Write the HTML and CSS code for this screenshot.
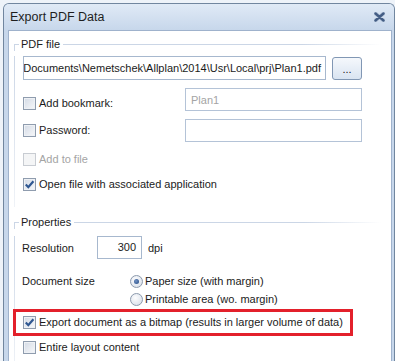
FILE: index.html
```html
<!DOCTYPE html>
<html lang="en">

<head>
    <meta charset="UTF-8">
    <title>Export PDF Data</title>
    <link rel="stylesheet" href="styles.css">
</head>

<body>
    <div class="window">
        <div class="titlebar">
            <span class="title">Export PDF Data</span>
            <svg class="close" width="11" height="10" viewBox="0 0 11 10">
                <path d="M1.5 1.5 L9.5 8.5 M9.5 1.5 L1.5 8.5" stroke="#b9c8dc" stroke-width="4" stroke-linecap="round" />
                <path d="M1.5 1.5 L9.5 8.5 M9.5 1.5 L1.5 8.5" stroke="#435d85" stroke-width="2.4" stroke-linecap="round" />
            </svg>
        </div>

        <div class="content">
            <div class="group">
                <div class="group-head"><span>PDF file</span></div>
                <div class="group-body">
                    <div class="path-row">
                        <div class="path-field"><span>C:\Users\Public\Documents\Nemetschek\Allplan\2014\Usr\Local\prj\Plan1.pdf</span></div>
                        <button class="browse">...</button>
                    </div>

                    <div class="field-row row-bookmark">
                        <label class="check"><span class="cb"></span>Add bookmark:</label>
                        <div class="textbox dim">Plan1</div>
                    </div>

                    <div class="field-row row-password">
                        <label class="check"><span class="cb"></span>Password:</label>
                        <div class="textbox"></div>
                    </div>

                    <label class="check row-addfile dim"><span class="cb off"></span>Add to file</label>

                    <label class="check row-open">
                        <span class="cb"><svg width="11" height="11" viewBox="0 0 11 11"><path d="M1.8 5.6 L4.3 8.2 L9.4 2.2" fill="none" stroke="#2f5791" stroke-width="2.2" /></svg></span>
                        Open file with associated application
                    </label>
                </div>
            </div>

            <div class="group group-props">
                <div class="group-head"><span>Properties</span></div>
                <div class="group-body">
                    <div class="prop-row">
                        <span class="res-label">Resolution</span>
                        <div class="num-field">300</div>
                        <span class="unit">dpi</span>
                    </div>

                    <div class="size-row">
                        <span class="size-label">Document size</span>
                        <div class="radios">
                            <label class="radio"><span class="rb on"></span>Paper size (with margin)</label>
                            <label class="radio"><span class="rb"></span>Printable area (wo. margin)</label>
                        </div>
                    </div>

                    <div class="bitmap-box">
                        <label class="check">
                            <span class="cb"><svg width="11" height="11" viewBox="0 0 11 11"><path d="M1.8 5.6 L4.3 8.2 L9.4 2.2" fill="none" stroke="#2f5791" stroke-width="2.2" /></svg></span>
                            Export document as a bitmap (results in larger volume of data)
                        </label>
                    </div>

                    <label class="check row-layout"><span class="cb"></span>Entire layout content</label>
                </div>
            </div>
        </div>
    </div>
</body>

</html>
```

FILE: styles.css
```css
/* styles.css */

body {
    margin: 0;
    height: 361px;
    overflow: hidden;
    background-color: #eef3f9;
    font-family: "Liberation Sans", Arial, sans-serif;
    font-size: 11px;
    color: #1b1b1b;
}

.window {
    display: flex;
    flex-direction: column;
    width: 390px;
    height: 357px;
    margin: 3px 0 0 3px;
    border: 1px solid #71869f;
    border-bottom: none;
    border-radius: 6px 6px 0 0;
    background-color: #c7d7eb;
}

.titlebar {
    display: flex;
    align-items: center;
    justify-content: space-between;
    flex: none;
    height: 26px;
    padding: 0 9px 0 6px;
    border-radius: 5px 5px 0 0;
    background: linear-gradient(#e0eaf6, #c7d7eb);
}

.title {
    font-size: 12.5px;
    color: #1e1e1e;
}

.content {
    flex: 1;
    min-height: 0;
    margin: 0 2px 0 4px;
    padding: 6px 10px 0 5px;
    overflow: hidden;
    background-color: #fff;
    border: 1px solid #9fb2cc;
    border-bottom: none;
}

/* group boxes */

.group-head {
    display: flex;
    height: 14px;
    line-height: 14px;
}

.group-head::before {
    content: "";
    align-self: flex-end;
    box-sizing: border-box;
    width: 5px;
    height: 7px;
    border-top: 1px solid #cbd6e6;
    border-left: 1px solid #cbd6e6;
}

.group-head span {
    padding: 0 3px 0 2px;
}

.group-head::after {
    content: "";
    flex: 1;
    align-self: flex-end;
    height: 1px;
    margin-bottom: 6px;
    background: linear-gradient(to right, #cbd6e6 75%, rgba(203, 214, 230, 0));
}

.group-body {
    padding: 0 0 16px 8px;
    border-left: 1px solid #cbd6e6;
    border-image: linear-gradient(#cbd6e6, rgba(203, 214, 230, 0.3)) 1;
}

.group-props {
    margin-top: 8px;
}

/* PDF file */

.path-row {
    display: flex;
    align-items: center;
    gap: 6px;
    margin-top: 5px;
}

.path-field {
    display: flex;
    align-items: center;
    justify-content: flex-end;
    box-sizing: border-box;
    width: 303px;
    height: 24px;
    padding: 0 4px;
    border: 1px solid #a7b8ce;
    overflow: hidden;
    white-space: nowrap;
}

.browse {
    width: 30px;
    height: 23px;
    padding: 2px 0 0;
    border: 1px solid #8197b4;
    border-radius: 3px;
    background: linear-gradient(#f5f8fc, #d9e4f1);
    font: inherit;
    color: #1b1b1b;
}

.field-row {
    display: flex;
    margin-top: 8px;
}

.row-bookmark {
    align-items: flex-end;
}

.row-bookmark .check {
    margin-bottom: 1px;
}

.row-password {
    align-items: center;
}

.field-row .check {
    width: 162px;
}

.textbox {
    display: flex;
    align-items: center;
    box-sizing: border-box;
    width: 177px;
    height: 23px;
    padding: 0 5px;
    border: 1px solid #b4c3d7;
}

.check {
    display: flex;
    align-items: center;
    gap: 3px;
    height: 13px;
    line-height: 13px;
    white-space: nowrap;
}

.row-addfile {
    margin-top: 11px;
}

.row-open {
    margin-top: 12px;
}

.dim {
    color: #a4a4a4;
}

.cb {
    display: flex;
    align-items: center;
    justify-content: center;
    flex: none;
    box-sizing: border-box;
    width: 13px;
    height: 13px;
    border: 1px solid #8f9cae;
    background: linear-gradient(135deg, #d3dae5, #f7f8fa);
    box-shadow: inset 0 0 0 1px #eef1f5;
}

.cb.off {
    border-color: #c8ccd2;
    background: #f4f5f6;
    box-shadow: none;
}

/* Properties */

.prop-row {
    display: flex;
    align-items: center;
    margin: 7px 0 0 -1px;
}

.res-label {
    width: 75px;
}

.num-field {
    box-sizing: border-box;
    width: 45px;
    height: 23px;
    padding-right: 5px;
    border: 1px solid #a7b8ce;
    line-height: 21px;
    text-align: right;
}

.unit {
    margin-left: 6px;
}

.size-row {
    display: flex;
    align-items: flex-start;
    margin: 16px 0 0 -1px;
    line-height: 13px;
}

.size-label {
    width: 108px;
}

.radios {
    display: flex;
    flex-direction: column;
    gap: 5px;
}

.radio {
    display: flex;
    align-items: center;
    gap: 2px;
    height: 13px;
}

.rb {
    display: flex;
    align-items: center;
    justify-content: center;
    box-sizing: border-box;
    width: 13px;
    height: 13px;
    border: 1px solid #8c9aad;
    border-radius: 50%;
    background: radial-gradient(circle at 40% 35%, #fdfdfe, #d3dbe6);
}

.rb.on::after {
    content: "";
    width: 5px;
    height: 5px;
    border-radius: 50%;
    background: radial-gradient(circle at 40% 40%, #7192c4, #1f4680);
}

.bitmap-box {
    box-sizing: border-box;
    width: 340px;
    margin: 3px 0 0 -10px;
    padding: 4px 0 4px 7px;
    border: 3px solid #e3202b;
}

.row-layout {
    margin-top: 5px;
}
```
